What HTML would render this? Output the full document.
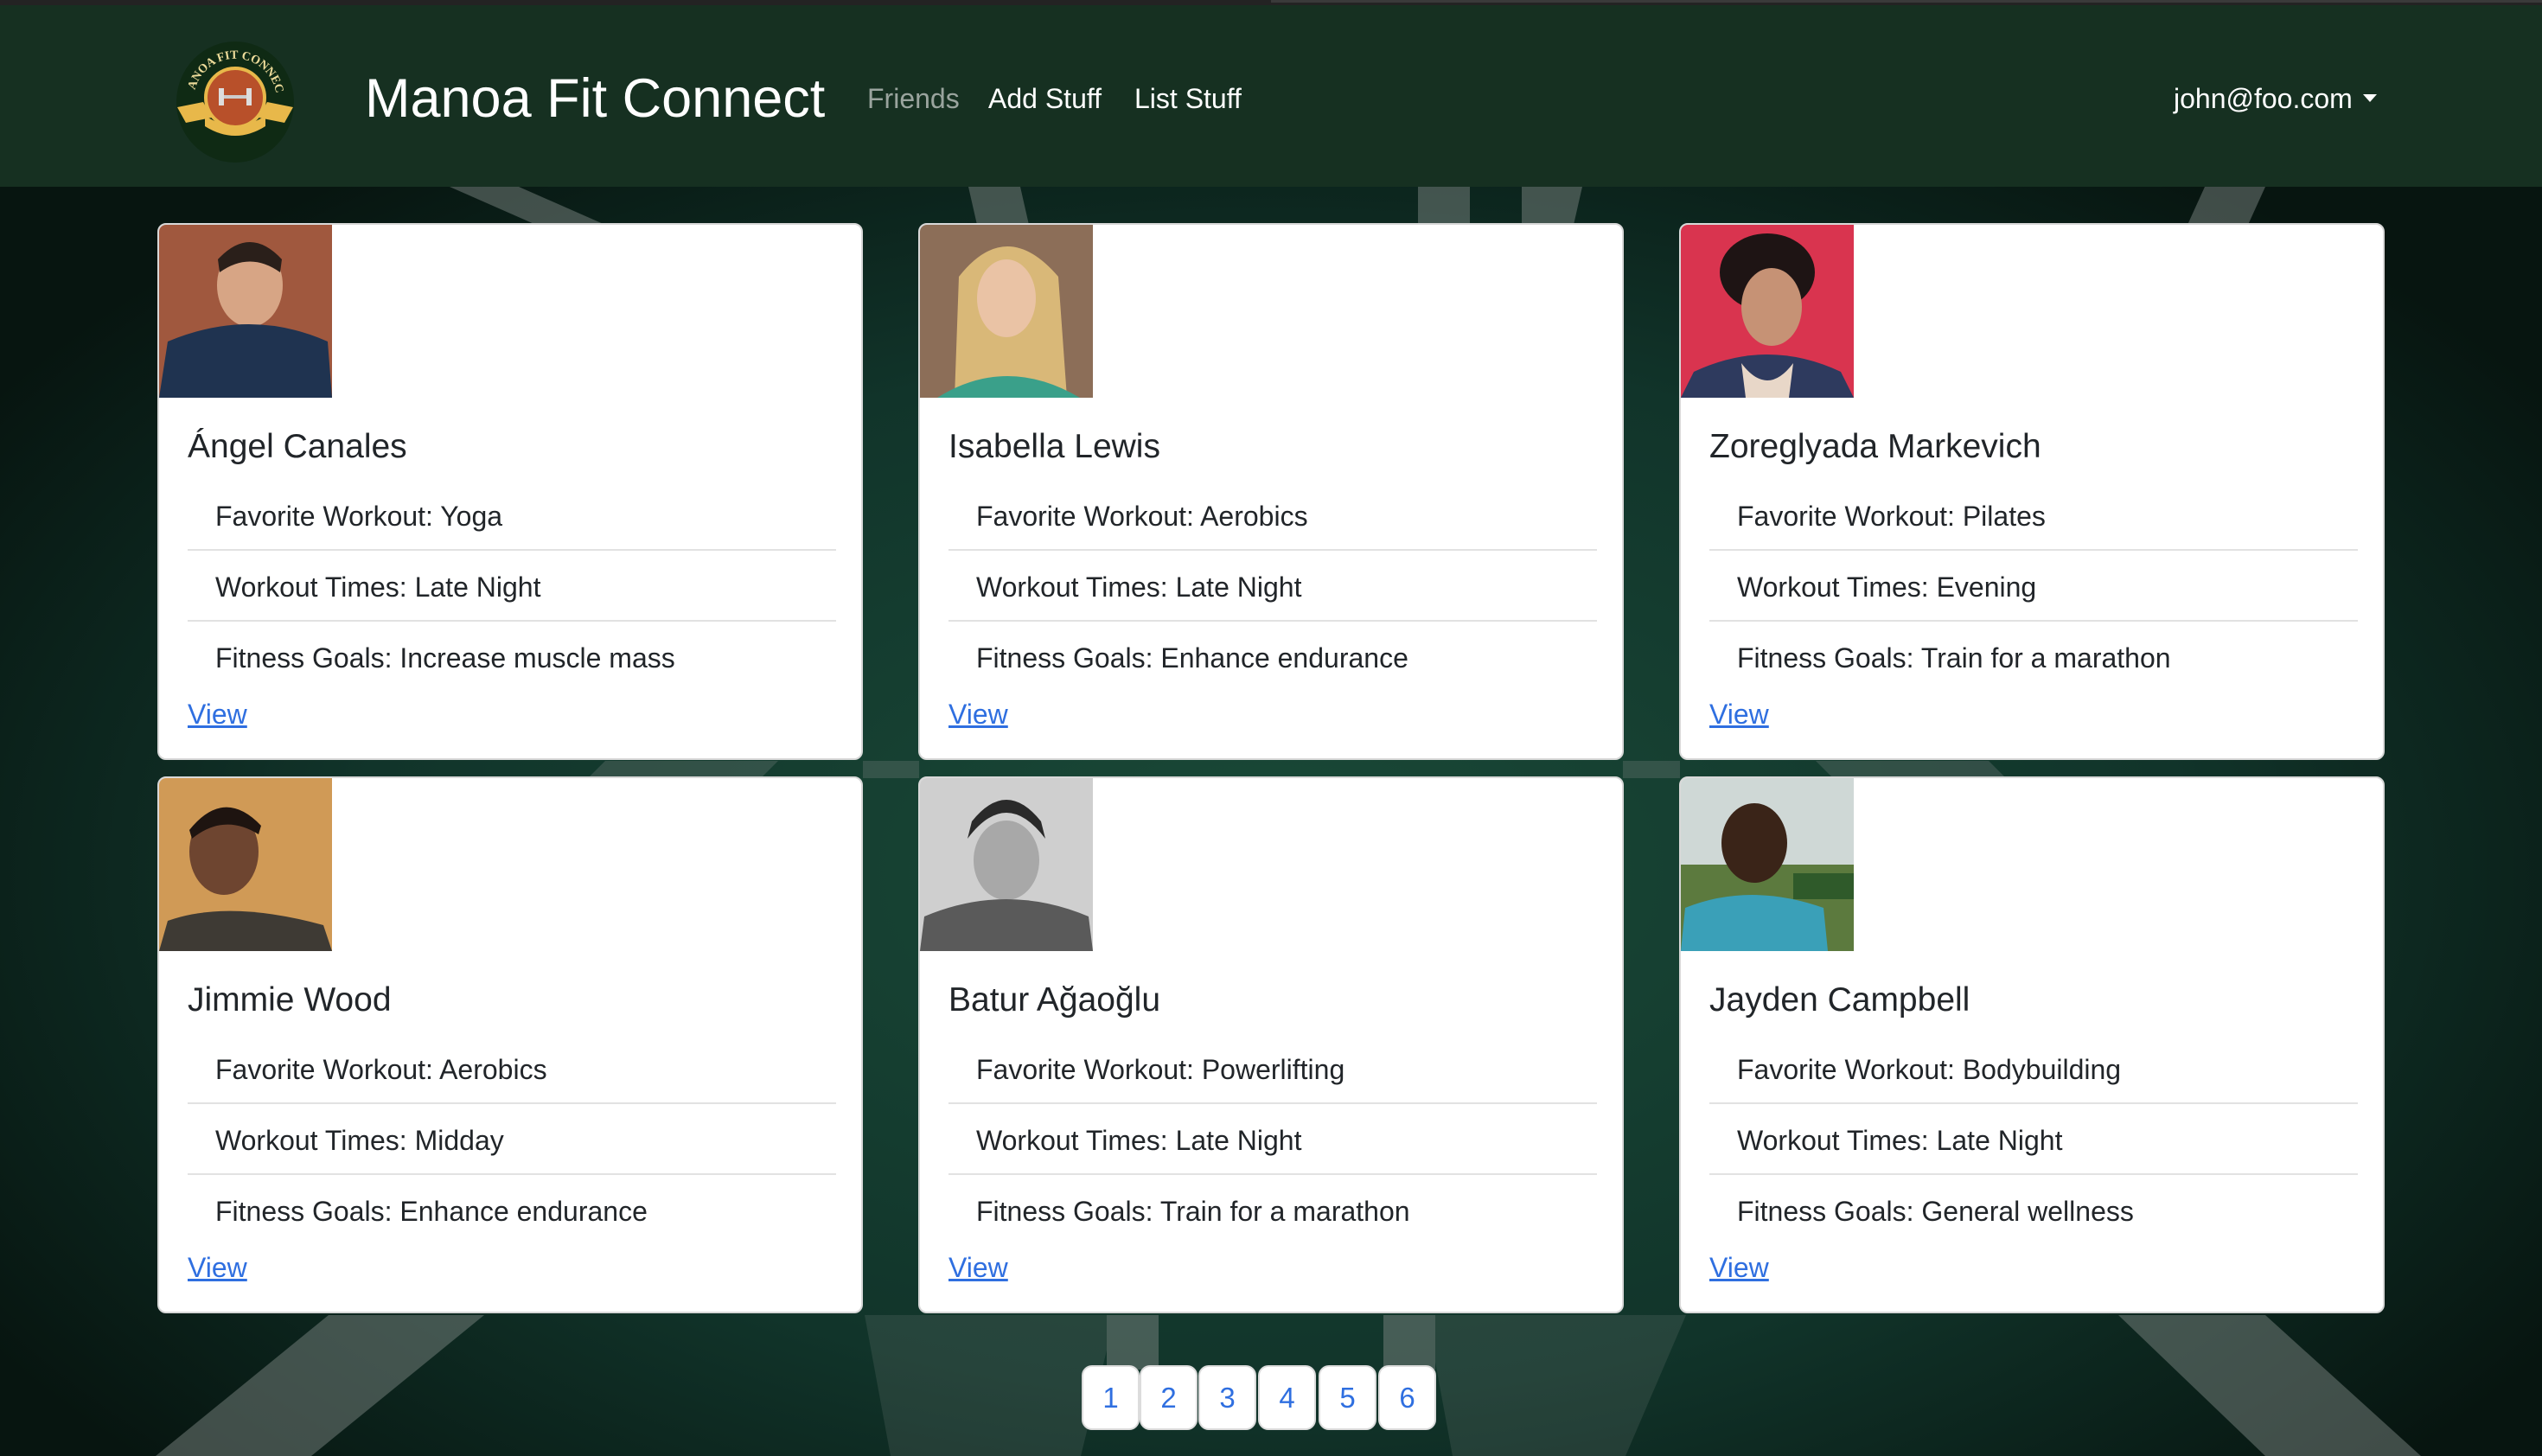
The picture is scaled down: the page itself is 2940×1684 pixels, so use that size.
<!DOCTYPE html>
<html><head><meta charset="utf-8"><style>
*{margin:0;padding:0;box-sizing:border-box}
body{width:2940px;height:1684px;overflow:hidden;position:relative;font-family:"Liberation Sans",sans-serif;background:#0c2119}
.bg{position:absolute;left:0;top:0;width:2940px;height:1684px}
.topbar{position:absolute;left:0;top:0;width:2940px;height:6px;background:#232323}
.topbar i{position:absolute;left:1470px;top:0;width:1470px;height:3px;background:#3a3a3a}
.nav{position:absolute;left:0;top:6px;width:2940px;height:210px;background:#163021}
.brand{position:absolute;left:422px;top:77px;font-size:63px;color:#fff;line-height:1}
.nl{position:absolute;top:92px;font-size:32px;line-height:1;color:#fff}
.card{position:absolute;width:816px;height:621px;background:#fff;border:2px solid #d8d8d8;border-radius:10px;overflow:hidden}
.card svg{position:absolute;left:0;top:0}
.name{position:absolute;left:33px;top:237px;font-size:39px;color:#212529;line-height:1}
.li{position:absolute;left:33px;width:750px;height:81px;border-bottom:2px solid #e2e2e2}
.li span{position:absolute;left:32px;top:22px;font-size:32px;color:#212529;line-height:1.2}
.li.last{border-bottom:none}
.view{position:absolute;left:33px;top:547px;font-size:32px;color:#2f6fe0;text-decoration:underline;line-height:1.2}
.pg{position:absolute;top:1579px;height:75px;width:67px;background:#fff;border:2px solid #dcdcdc;border-radius:12px;color:#2f6fe0;font-size:33px;text-align:center;line-height:71px}
</style></head><body>
<svg class="bg" viewBox="0 0 2940 1684">
<defs><radialGradient id="g" cx="50%" cy="60%" r="60%"><stop offset="0" stop-color="#1a4a38"/><stop offset="0.6" stop-color="#11342a"/><stop offset="1" stop-color="#071510"/></radialGradient></defs>
<rect width="2940" height="1684" fill="url(#g)"/>
<g fill="#7a8480" opacity="0.5">
<polygon points="520,216 600,216 700,260 620,260"/>
<polygon points="1120,216 1180,216 1190,260 1130,260"/>
<polygon points="1640,216 1700,216 1700,260 1640,260"/>
<polygon points="1760,216 1830,216 1820,260 1760,260"/>
<polygon points="2550,216 2620,216 2600,260 2530,260"/>
<polygon points="380,1521 560,1521 360,1684 180,1684"/>
<polygon points="2450,1521 2620,1521 2800,1684 2620,1684"/>
<polygon points="1000,1521 1290,1521 1250,1684 1030,1684" opacity="0.4"/>
<polygon points="1650,1521 1950,1521 1880,1684 1680,1684" opacity="0.4"/>
<polygon points="1280,1521 1340,1521 1340,1584 1280,1584"/>
<polygon points="1600,1521 1660,1521 1660,1584 1600,1584"/>
<polygon points="998,880 1063,880 1063,900 998,900" opacity="0.6"/>
<polygon points="1877,880 1943,880 1943,900 1877,900" opacity="0.6"/>
<polygon points="700,880 900,880 880,900 680,900" opacity="0.6"/>
<polygon points="2100,880 2300,880 2320,900 2120,900" opacity="0.6"/>
</g>
</svg>
<div class="topbar"><i></i></div>
<div class="nav">
<svg style="position:absolute;left:195px;top:40px" width="160" height="150" viewBox="0 0 160 150">
<ellipse cx="77" cy="72" rx="68" ry="70" fill="#0f2a14"/>
<circle cx="77" cy="67" r="34" fill="#b8502a" stroke="#e8b84a" stroke-width="4"/>
<path d="M10 78 L40 72 L50 90 L20 96 Z" fill="#e8b84a"/>
<path d="M144 78 L114 72 L104 90 L134 96 Z" fill="#e8b84a"/>
<path d="M42 88 Q77 110 112 88 L112 100 Q77 122 42 100 Z" fill="#e8b84a"/>
<rect x="60" y="64" width="34" height="4" fill="#ccc"/><rect x="58" y="56" width="6" height="20" fill="#ddd"/><rect x="90" y="56" width="6" height="20" fill="#ddd"/>
<path id="arc" d="M30 60 A48 48 0 0 1 124 60" fill="none"/>
<text font-size="14" fill="#eedc9a" font-family="Liberation Serif" font-weight="bold"><textPath href="#arc" startOffset="50%" text-anchor="middle">MANOA FIT CONNECT</textPath></text>
</svg>
<div class="brand">Manoa Fit Connect</div>
<div class="nl" style="left:1003px;color:#9aa49e">Friends</div>
<div class="nl" style="left:1143px">Add Stuff</div>
<div class="nl" style="left:1312px">List Stuff</div>
<div class="nl" style="left:2514px">john@foo.com</div>
<div style="position:absolute;left:2733px;top:103px;width:0;height:0;border-left:8px solid transparent;border-right:8px solid transparent;border-top:9px solid #fff"></div>
</div>

<div class="card" style="left:182px;top:258px">
<svg width="200" height="200"><rect width="200" height="200" fill="#a0583e"/><ellipse cx="105" cy="70" rx="38" ry="48" fill="#d7a585"/><path d="M68 40 Q105 0 142 40 L140 55 Q105 30 70 55Z" fill="#2a1f1a"/><path d="M0 200 L10 135 Q105 95 195 135 L200 200Z" fill="#1f3350"/></svg>
<div class="name">Ángel Canales</div>
<div class="li" style="top:296px"><span>Favorite Workout: Yoga</span></div>
<div class="li" style="top:378px"><span>Workout Times: Late Night</span></div>
<div class="li last" style="top:460px"><span>Fitness Goals: Increase muscle mass</span></div>
<div class="view">View</div>
</div>
<div class="card" style="left:1062px;top:258px">
<svg width="200" height="200"><rect width="200" height="200" fill="#8c6e58"/><path d="M40 200 L45 60 Q100 -10 160 60 L170 200Z" fill="#d9b878"/><ellipse cx="100" cy="85" rx="34" ry="45" fill="#eac3a5"/><path d="M20 200 Q100 150 185 200Z" fill="#3aa08a"/></svg>
<div class="name">Isabella Lewis</div>
<div class="li" style="top:296px"><span>Favorite Workout: Aerobics</span></div>
<div class="li" style="top:378px"><span>Workout Times: Late Night</span></div>
<div class="li last" style="top:460px"><span>Fitness Goals: Enhance endurance</span></div>
<div class="view">View</div>
</div>
<div class="card" style="left:1942px;top:258px">
<svg width="200" height="200"><rect width="200" height="200" fill="#d9344f"/><ellipse cx="100" cy="55" rx="55" ry="45" fill="#1e1414"/><ellipse cx="105" cy="95" rx="35" ry="45" fill="#c69275"/><path d="M0 200 L15 170 Q100 130 185 170 L200 200Z" fill="#2e3a5e"/><path d="M70 160 Q100 200 130 160 L125 200 L75 200Z" fill="#e8d7c8"/></svg>
<div class="name">Zoreglyada Markevich</div>
<div class="li" style="top:296px"><span>Favorite Workout: Pilates</span></div>
<div class="li" style="top:378px"><span>Workout Times: Evening</span></div>
<div class="li last" style="top:460px"><span>Fitness Goals: Train for a marathon</span></div>
<div class="view">View</div>
</div>

<div class="card" style="left:182px;top:898px">
<svg width="200" height="200"><rect width="200" height="200" fill="#d09a56"/><ellipse cx="75" cy="85" rx="40" ry="50" fill="#6e4530"/><path d="M35 60 Q75 10 118 55 L115 65 Q75 40 38 70Z" fill="#1e1410"/><path d="M0 200 L10 165 Q80 140 190 170 L200 200Z" fill="#3e3a34"/></svg>
<div class="name">Jimmie Wood</div>
<div class="li" style="top:296px"><span>Favorite Workout: Aerobics</span></div>
<div class="li" style="top:378px"><span>Workout Times: Midday</span></div>
<div class="li last" style="top:460px"><span>Fitness Goals: Enhance endurance</span></div>
<div class="view">View</div>
</div>
<div class="card" style="left:1062px;top:898px">
<svg width="200" height="200"><rect width="200" height="200" fill="#cfcfcf"/><ellipse cx="100" cy="95" rx="38" ry="46" fill="#a8a8a8"/><path d="M55 70 Q100 10 145 70 L140 50 Q100 0 60 50Z" fill="#2a2a2a"/><path d="M0 200 L5 160 Q100 120 195 160 L200 200Z" fill="#5a5a5a"/></svg>
<div class="name">Batur Ağaoğlu</div>
<div class="li" style="top:296px"><span>Favorite Workout: Powerlifting</span></div>
<div class="li" style="top:378px"><span>Workout Times: Late Night</span></div>
<div class="li last" style="top:460px"><span>Fitness Goals: Train for a marathon</span></div>
<div class="view">View</div>
</div>
<div class="card" style="left:1942px;top:898px">
<svg width="200" height="200"><rect width="200" height="110" fill="#cfd8d6"/><rect y="100" width="200" height="100" fill="#5c7a3e"/><rect x="130" y="110" width="70" height="30" fill="#2f5a2a"/><ellipse cx="85" cy="75" rx="38" ry="46" fill="#3a2418"/><path d="M0 200 L5 150 Q80 120 165 150 L170 200Z" fill="#3aa0b8"/></svg>
<div class="name">Jayden Campbell</div>
<div class="li" style="top:296px"><span>Favorite Workout: Bodybuilding</span></div>
<div class="li" style="top:378px"><span>Workout Times: Late Night</span></div>
<div class="li last" style="top:460px"><span>Fitness Goals: General wellness</span></div>
<div class="view">View</div>
</div>

<div class="pg" style="left:1251px">1</div>
<div class="pg" style="left:1318px">2</div>
<div class="pg" style="left:1386px">3</div>
<div class="pg" style="left:1455px">4</div>
<div class="pg" style="left:1525px">5</div>
<div class="pg" style="left:1594px">6</div>
</body></html>
